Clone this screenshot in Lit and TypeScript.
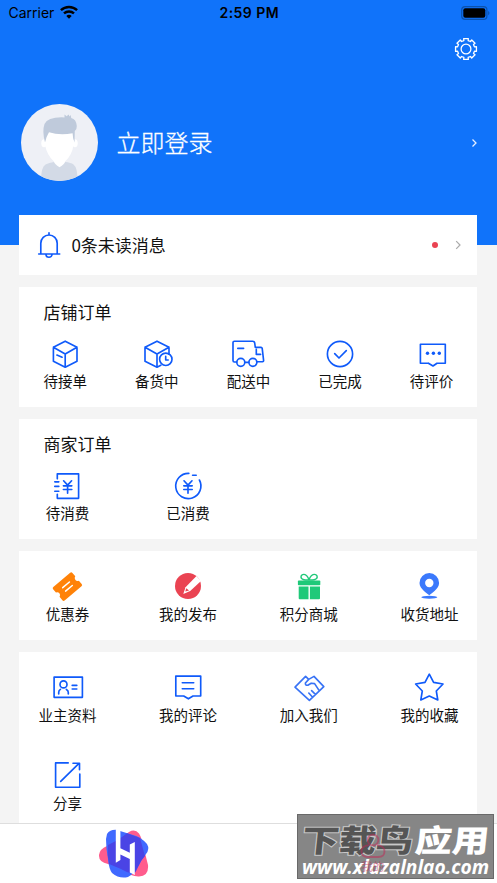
import { LitElement, html, svg, css, type SVGTemplateResult } from "lit";
import { customElement, property } from "lit/decorators.js";

/* Every glyph is drawn around the origin of a 32 x 32 box. */
const yen = svg`<path d="M-4-5.2 0-.9 4-5.2M0-.9V7.2M-4.2-.2H4.2M-4.2 3.5H4.2"/>`;

const gearPath = (() => {
  const points: string[] = [];
  for (let k = 0; k < 8; k++) {
    const a = (k * Math.PI) / 4;
    for (const [r, d] of [[8.7, -0.25], [10.7, -0.22], [10.7, 0.22], [8.7, 0.25]]) {
      points.push(`${(r * Math.cos(a + d)).toFixed(2)} ${(r * Math.sin(a + d)).toFixed(2)}`);
    }
  }
  return `M${points.join("L")}Z`;
})();

const icons: Record<string, SVGTemplateResult> = {
  gear: svg`<g stroke="#fff" stroke-width="1.3"><path d=${gearPath}/><circle r="4.9"/></g>`,
  bell: svg`<path d="M-8.2 8.7V-1.8a8.2 8.2 0 0 1 16.4 0V8.7M-10.3 9H10.7M0-12.3V-10M-3 9.6a3 2.7 0 0 0 6 0"/>`,
  box: svg`<path d="M.2-12.8 12-6.8V7.2L.2 13.2-11.6 7.2V-6.8ZM-11.6-6.8.2 0 12-6.8M.2 0V13.2M-8.1 1-2.9 3.2"/>`,
  boxClock: svg`<path d="M12 .2V-6.8L0-12.8-12-6.8V7.2L0 13.2 3.8 11.3M-12-6.8 0 0 12-6.8M0 0V13.2"/><circle cx="8.8" cy="5.3" r="6.2"/><path d="M8.7 2.4V6H11.2"/>`,
  truck: svg`<path d="M-11.2 8H-13.6Q-15 8-15 6.5V-11.4Q-15-12.8-13.6-12.8H4.6Q6.4-12.8 6.7-11L7.3-6.6H13Q14 -6.6 14.2-5.6L15.6 6.4Q15.7 7.6 14.5 7.7H9M-3.2 8.3H.8M-10.2-5.6H-4.4M8.3-4.6V.4H12.6"/><circle cx="-7.2" cy="8.3" r="4"/><circle cx="4.9" cy="8.3" r="4"/>`,
  check: svg`<circle r="12.6"/><path d="M-5.3-.4-1 4 6.3-3.4"/>`,
  review: svg`<path d="M-3.6 9.2H-11.6V-9.8H13.3V9.2H5L1 12-3.6 9.2"/><g class="fill"><circle cx="-4.5" cy="-.7" r="1.7"/><circle cx="1.4" cy="-.7" r="1.7"/><circle cx="7.3" cy="-.7" r="1.7"/></g>`,
  bill: svg`<path d="M-9.7-7.2V-12.2H11.6V12.3H-9.7V8.2M-12.2-4.2H-8.2M-12.2.4H-8.2M-12.2 5.2H-8.2"/><g transform="translate(.6 0)">${yen}</g>`,
  used: svg`<path d="M.8-12.6A12.6 12.6 0 1 0 11.4-6M4.6-10.8H8.2"/>${yen}`,
  ticket: svg`<g transform="translate(.4 .6) rotate(-40)"><path class="solid" fill="#ff8208" d="M-11-8.8H11Q12.6-8.8 12.6-7.2V-2.8A2.9 2.9 0 0 0 12.6 2.8V7.2Q12.6 8.8 11 8.8H-11Q-12.6 8.8-12.6 7.2V2.8A2.9 2.9 0 0 0-12.6-2.8V-7.2Q-12.6-8.8-11-8.8Z"/><path stroke="#fff" stroke-width="1.5" d="M-4.3-2.2H4.5M-4.3 2.3H4.5"/></g>`,
  publish: svg`<g class="solid"><circle r="13" fill="#ea4352"/><path fill="#fff" d="M-4.7 8-2.5 1.2 8.5-9.9 13-5 2.2 5.1Z"/><path fill="#ea4352" d="M-2.7 5.6-1.8 2.2 1.1 4.6Z"/></g>`,
  gift: svg`<g class="solid" fill="#1fc979"><rect x="-11.1" y="-5.4" width="22.4" height="4.6" rx=".8"/><path d="M-10.3.6H-.5V13.2H-9.3Q-10.3 13.2-10.3 12.2ZM.9.6H11V12.2Q11 13.2 10 13.2H.9Z"/></g><path stroke="#1fc979" stroke-width="1.4" d="M0-6C-3-5.8-8-6-8-9S-2.5-14 0-6C2.5-14 8.2-12 8.2-9S3-5.8 0-6Z"/>`,
  pin: svg`<g class="solid" fill="#3b79fc"><path fill-rule="evenodd" d="M.3 9.3C-1.5 7-9.5 3.2-9.5-3.1A9.8 9.8 0 1 1 10.1-3.1C10.1 3.2 2 7 .3 9.3ZM.3-7.2A4.2 4.2 0 1 0 .3 1.2 4.2 4.2 0 1 0 .3-7.2Z"/><ellipse cx=".3" cy="11.3" rx="8" ry="1.5"/></g>`,
  owner: svg`<path d="M-12.9-9.9H15.4V10.3H-12.9ZM5.2-1.6H9.8M5.2 2H9.8M-8.3 7V5.5Q-8.3 3.4-6.6 2.4M1.3 7V5.5Q1.3 3.4-.6 2.4"/><circle cx="-3.5" cy="-2.6" r="3.5"/>`,
  comment: svg`<path d="M-4.3 9H-12.2V-10.9H12.7V9H5L.4 11.8-4.3 9M-5.7-4.3H5.7M-5.7 1.7H5.7"/>`,
  join: svg`<path stroke="#3873f5" d="M-14 .2-3.4-10.6-.3-7.6 5-10.6 14.8-.4.4 13.4ZM-.3-7.6-3.6-4Q-3.8-1.4-1.2-1.8L2.2-3.8 5.6-3.4 10.2 3.6M-.2 6 3.4 10M2.6 3.6 6.4 7.3"/>`,
  star: svg`<path d="M.3-12.8 4.6-4.6 14-3 7.3 4 8.8 13 .3 9-8.2 13-6.7 4-13.4-3-4-4.6Z"/>`,
  share: svg`<path d="M1.2-12.1H-11.4V12.2H12.8V-1M-6.3 6.4 12-11.6M6-11.8H12.5V-5.3"/>`,
};

interface Entry { icon: string; label: string }

@customElement("glyph-icon")
class GlyphIcon extends LitElement {
  @property() name = "";
  static styles = css`
    :host { display: block; width: 32px; height: 32px; flex: none; }
    svg { display: block; width: 32px; height: 32px; overflow: visible; fill: none; stroke: #0f5afa; stroke-width: 1.65; stroke-linejoin: round; stroke-linecap: round; }
    .solid { stroke: none; }
    .fill { fill: #0f5afa; stroke: none; }
  `;
  render() {
    return html`<svg viewBox="-16 -16 32 32">${icons[this.name]}</svg>`;
  }
}

@customElement("menu-card")
class MenuCard extends LitElement {
  @property() heading = "";
  @property({ attribute: false }) entries: Entry[] = [];
  @property({ type: Boolean }) five = false;
  static styles = css`
    :host { display: block; background: #fff; box-sizing: border-box; overflow: hidden; }
    .heading { margin: 13px 0 0 24px; height: 28px; font-size: 17px; line-height: 28px; }
    .heading + .grid { margin-top: 10px; }
    .grid { display: grid; grid-template-columns: repeat(4, 96px); justify-content: space-between; margin-top: 19px; row-gap: 16.5px; }
    .five { grid-template-columns: repeat(5, 1fr); }
    .entry { display: flex; flex-direction: column; align-items: center; height: 72px; }
    .five .entry, .heading + .grid .entry { height: 54px; }
    .label { margin-top: .6px; font-size: 14.5px; line-height: 24px; white-space: nowrap; }
    .heading + .grid .label { margin-top: 0; }
  `;
  render() {
    return html`
      ${this.heading ? html`<div class="heading">${this.heading}</div>` : null}
      <div class="grid ${this.five ? "five" : ""}">
        ${this.entries.map((e) => html`
          <div class="entry"><glyph-icon name=${e.icon}></glyph-icon><span class="label">${e.label}</span></div>`)}
      </div>`;
  }
}

const shop: Entry[] = [
  { icon: "box", label: "待接单" }, { icon: "boxClock", label: "备货中" }, { icon: "truck", label: "配送中" },
  { icon: "check", label: "已完成" }, { icon: "review", label: "待评价" },
];
const merchant: Entry[] = [{ icon: "bill", label: "待消费" }, { icon: "used", label: "已消费" }];
const services: Entry[] = [
  { icon: "ticket", label: "优惠券" }, { icon: "publish", label: "我的发布" },
  { icon: "gift", label: "积分商城" }, { icon: "pin", label: "收货地址" },
];
const more: Entry[] = [
  { icon: "owner", label: "业主资料" }, { icon: "comment", label: "我的评论" }, { icon: "join", label: "加入我们" },
  { icon: "star", label: "我的收藏" }, { icon: "share", label: "分享" },
];

@customElement("app-root")
class AppRoot extends LitElement {
  static styles = css`
    :host { display: flex; flex-direction: column; position: relative; width: 497px; height: 883px; overflow: hidden; background: #f4f4f4; color: #111; font-family: "Liberation Sans", "Noto Sans CJK SC", sans-serif; }
    svg { display: block; flex: none; }
    .hero { flex: none; height: 245px; background: #1073fa; display: flex; flex-direction: column; }
    .status { display: grid; grid-template-columns: 1fr auto 1fr; align-items: center; height: 26px; padding: 0 7px 0 8.5px; color: #000; font: 14px/26px Inter, sans-serif; }
    .carrier { display: flex; align-items: center; gap: 6px; }
    .carrier svg { margin-top: -2px; }
    .time { font-weight: 600; letter-spacing: .45px; }
    .battery { justify-self: end; margin-top: -1px; }
    .tools { display: flex; justify-content: flex-end; padding: 7px 15.5px 0 0; }
    .login { display: flex; align-items: center; margin-top: 39px; padding: 0 19px 0 20.5px; height: 77px; color: #fff; }
    .login-text { flex: 1; margin: -1px 0 0 19px; font: 300 24px/36px "Noto Sans CJK SC", sans-serif; -webkit-text-stroke: .3px #fff; }
    .content { flex: 1; min-height: 0; display: flex; flex-direction: column; gap: 12.4px; margin: -30px 19.6px 0 19.4px; }
    .message { flex: none; height: 59.6px; background: #fff; display: flex; align-items: center; padding: 0 15.5px 0 14px; font-size: 17px; }
    .message-text { flex: 1; margin: -1px 0 0 6px; font-family: "Noto Sans CJK SC", sans-serif; }
    .dot { width: 6.4px; height: 6.4px; border-radius: 50%; background: #ea4352; margin-right: 16px; }
    menu-card { flex: none; }
    .orders { height: 119.6px; }
    .services { height: 88.6px; }
    .more { height: 172px; }
    .tabs { flex: none; height: 59px; border-top: 1px solid #dedede; background: #fff; display: grid; grid-template-columns: 1fr 1fr; justify-items: center; }
    .tab-logo { margin-top: 5px; }
    .mine { position: relative; z-index: 2; display: flex; flex-direction: column; align-items: center; padding-top: 9px; color: #c22756; opacity: .5; font-size: 11.5px; line-height: 16px; }
    .watermark { position: absolute; left: 297px; top: 814px; width: 197px; height: 65px; overflow: visible; }
  `;

  render() {
    return html`
      <div class="hero">
        <div class="status">
          <div class="carrier"><span>Carrier</span>
            <svg width="18" height="14" viewBox="0 0 18 14" fill="none" stroke="currentColor" stroke-width="2.4">
              <path d="M.9 5.2A11.8 11.8 0 0 1 17.1 5.2M4 8.4A7.4 7.4 0 0 1 14 8.4"/><path d="M6.3 10.9A4 4 0 0 1 11.7 10.9L9 13.8Z" fill="currentColor" stroke="none"/>
            </svg>
          </div>
          <span class="time">2:59 PM</span>
          <svg class="battery" width="29" height="14" viewBox="0 0 29 14"><rect x=".7" y=".7" width="25.2" height="12.6" rx="3.4" fill="none" stroke="#0b52ae" stroke-width="1.2"/><rect x="2.3" y="2.3" width="22" height="9.4" rx="2"/><path d="M27.2 4.7Q29.7 7 27.2 9.3Z" fill="#0b52ae"/></svg>
        </div>
        <div class="tools"><glyph-icon name="gear"></glyph-icon></div>
        <div class="login">
          <svg width="77" height="77" viewBox="0 0 77 77">
            <defs><clipPath id="round"><circle cx="38.5" cy="38.5" r="38.5"/></clipPath></defs>
            <g clip-path="url(#round)">
              <path fill="#eef0f6" d="M0 0H77V77H0Z"/>
              <path fill="#d3dae6" d="M20 77Q20 63 24.5 60.5Q28 58.5 33 58H44Q50 58.5 52.5 60.5Q57 64 56.3 77Z"/>
              <path fill="#fff" d="M33 54H44V58Q43.7 60 38.5 63.2Q33.5 60 33 58Z"/>
              <ellipse cx="23" cy="39.3" rx="2.7" ry="4" fill="#fff"/><ellipse cx="54" cy="39.3" rx="2.7" ry="4" fill="#fff"/>
              <path fill="#fff" d="M24 27H52.5V41Q51 51 44.5 57Q38.5 61 32.5 57Q26 51 24 41Z"/>
              <path fill="#bfcadb" d="M24 38.5Q21 27 23.5 20Q27 12.6 43.5 13.4V10.4L45.7 12.2 47.6 10.5 48.5 12.4 49.7 11 50.2 13.9Q55.3 15 55.8 22Q56 25 53.8 27L53.5 38.5Q51.8 35 51.6 29.2Q38.5 31.5 28 28.2Q25.5 32 24 38.5Z"/>
            </g>
          </svg>
          <div class="login-text">立即登录</div>
          <svg width="8" height="10" viewBox="0 0 8 10" fill="none" stroke="#e5efff" stroke-width="1.3"><path d="M2.5 1.5 6 5 2.5 8.5"/></svg>
        </div>
      </div>
      <div class="content">
        <div class="message">
          <glyph-icon name="bell"></glyph-icon>
          <div class="message-text">0条未读消息</div>
          <i class="dot"></i>
          <svg width="8" height="10" viewBox="0 0 8 10" fill="none" stroke="#aaa" stroke-width="1.2"><path d="M2.2 1.2 6 5 2.2 8.8"/></svg>
        </div>
        <menu-card class="orders" heading="店铺订单" five .entries=${shop}></menu-card>
        <menu-card class="orders" heading="商家订单" .entries=${merchant}></menu-card>
        <menu-card class="services" .entries=${services}></menu-card>
        <menu-card class="more" .entries=${more}></menu-card>
      </div>
      <div class="tabs">
        <svg class="tab-logo" width="52" height="50" viewBox="0 0 52 50">
          <path fill="#ff5c8d" d="M31 3Q37-.5 41 4.5Q44 9 46 20L50 36Q51 47 41 47.5Q34 48 23 40L10 35Q.5 33 1 26Q1.6 20 9 17Q21 11 31 3Z"/>
          <path fill="#4069ff" d="M9 5Q12 .5 18 0.8L35 6Q43 8 49 15Q52 20 48 25Q44 29 41 36Q36 45 30 48Q21 50 14 44Q11 40 10 30Q8 20 8 10Z"/>
          <path fill="#4a44e5" d="M10 16Q21 11 29 4.3L42 9Q45 20 47 27Q43 31 40 38Q38 43 36 45Q29 44 23 40L11 35Q9 26 10 16Z"/>
          <path fill="#fff" d="M17.8 0 22.4 1V19.3L31.8 23.8V15.5L36.8 13V46L31.8 43.5V30L22.4 25.6V31L17.8 33.7Z"/>
        </svg>
        <div class="mine">
          <svg width="28" height="26" viewBox="0 0 28 26" fill="none" stroke="currentColor" stroke-width="1.8"><circle cx="14" cy="7" r="5.4"/><path d="M10 12.2Q2.5 13 2.5 18.5Q2.5 24 9 24H19Q25.5 24 25.5 18.5Q25.5 13 18 12.2"/></svg>
          <span>我的</span>
        </div>
      </div>
      <svg class="watermark" width="197" height="65" viewBox="0 0 197 65">
        <rect x=".5" y=".5" width="196" height="64" fill="#868686" stroke="#696969"/>
        <g font-family="Noto Sans CJK SC, sans-serif" font-weight="900" font-size="37" transform="skewX(-6) scale(1 .84)">
          <text x="8" y="45.6" textLength="111" fill="#555" stroke="#c8c8c8" stroke-width="2.4" paint-order="stroke">下载鸟</text>
          <text x="121" y="45.6" textLength="74" fill="#fff">应用</text>
        </g>
        <text x="5" y="59.5" textLength="187" lengthAdjust="spacingAndGlyphs" fill="#fff" font-family="Open Sans, sans-serif" font-weight="700" font-style="italic" font-size="19">www.xlazalnlao.com</text>
      </svg>`;
  }
}
